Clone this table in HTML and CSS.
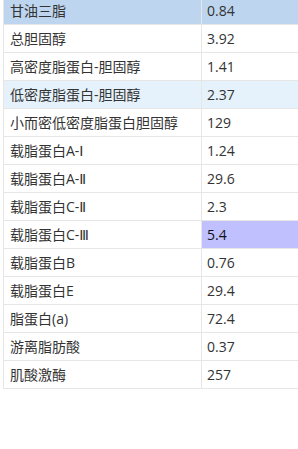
FILE: index.html
```html
<!DOCTYPE html>
<html>
<head>
<meta charset="utf-8">
<link rel="stylesheet" href="styles.css">
</head>
<body>
<div class="wrap">
<table class="grid">
<tr class="sel"><td class="name">甘油三脂</td><td class="val">0.84</td></tr>
<tr><td class="name">总胆固醇</td><td class="val">3.92</td></tr>
<tr><td class="name">高密度脂蛋白-胆固醇</td><td class="val">1.41</td></tr>
<tr class="hover"><td class="name">低密度脂蛋白-胆固醇</td><td class="val">2.37</td></tr>
<tr><td class="name">小而密低密度脂蛋白胆固醇</td><td class="val">129</td></tr>
<tr><td class="name">载脂蛋白A-Ⅰ</td><td class="val">1.24</td></tr>
<tr><td class="name">载脂蛋白A-Ⅱ</td><td class="val">29.6</td></tr>
<tr><td class="name">载脂蛋白C-Ⅱ</td><td class="val">2.3</td></tr>
<tr><td class="name">载脂蛋白C-Ⅲ</td><td class="val mark">5.4</td></tr>
<tr><td class="name">载脂蛋白B</td><td class="val">0.76</td></tr>
<tr><td class="name">载脂蛋白E</td><td class="val">29.4</td></tr>
<tr><td class="name">脂蛋白(a)</td><td class="val">72.4</td></tr>
<tr><td class="name">游离脂肪酸</td><td class="val">0.37</td></tr>
<tr><td class="name">肌酸激酶</td><td class="val">257</td></tr>
</table>
</div>
</body>
</html>
```
FILE: styles.css
```css
html, body {
  margin: 0;
  padding: 0;
  background: #ffffff;
}
.wrap {
  margin-left: 3px;
  margin-top: -3px;
}
.grid {
  border-collapse: collapse;
  width: 295px;
  table-layout: fixed;
  font-family: "Open Sans", "DejaVu Sans", "Noto Sans CJK SC", sans-serif;
  font-size: 14px;
  color: #333333;
  border-left: 1px solid #e6e6e6;
}
.grid td {
  height: 27px;
  padding: 0 0 0 6px;
  border-bottom: 1px solid #e6e6e6;
  white-space: nowrap;
  overflow: hidden;
  line-height: 27px;
  box-sizing: content-box;
}
.grid td.name {
  width: 191px;
  border-right: 1px solid #e6e6e6;
}
.grid td.val {
  padding-left: 5px;
}
.sel td {
  background: #bdd5ee;
}
.hover td {
  background: #e5f2fc;
}
.grid td.mark {
  background: #c0c0ff;
  color: #111111;
}
```
